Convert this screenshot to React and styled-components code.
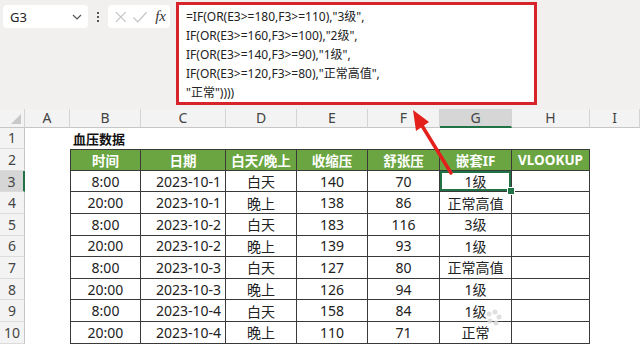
import React from "react";
import styled, { createGlobalStyle } from "styled-components";

const GlobalStyle = createGlobalStyle`
  html, body {
    margin: 0;
    padding: 0;
    background: #ffffff;
  }
  body {
    font-family: "Noto Sans", "Noto Sans CJK SC", sans-serif;
  }
`;

const columns = [
  { key: "A", width: 45 },
  { key: "B", width: 71 },
  { key: "C", width: 85 },
  { key: "D", width: 71 },
  { key: "E", width: 71 },
  { key: "F", width: 72 },
  { key: "G", width: 72 },
  { key: "H", width: 78 },
  { key: "I", width: 50 },
];

const headers = ["时间", "日期", "白天/晚上", "收缩压", "舒张压", "嵌套IF", "VLOOKUP"];

const rows = [
  ["8:00", "2023-10-1", "白天", "140", "70", "1级", ""],
  ["20:00", "2023-10-1", "晚上", "138", "86", "正常高值", ""],
  ["8:00", "2023-10-2", "白天", "183", "116", "3级", ""],
  ["20:00", "2023-10-2", "晚上", "139", "93", "1级", ""],
  ["8:00", "2023-10-3", "白天", "127", "80", "正常高值", ""],
  ["20:00", "2023-10-3", "晚上", "126", "94", "1级", ""],
  ["8:00", "2023-10-4", "白天", "158", "84", "1级", ""],
  ["20:00", "2023-10-4", "晚上", "110", "71", "正常", ""],
];

const formula = [
  '=IF(OR(E3>=180,F3>=110),"3级",',
  'IF(OR(E3>=160,F3>=100),"2级",',
  'IF(OR(E3>=140,F3>=90),"1级",',
  'IF(OR(E3>=120,F3>=80),"正常高值",',
  '"正常"))))',
];

const App = () => {
  return (
    <Page>
      <GlobalStyle />
      <TopBar>
        <NameBox>
          <span>G3</span>
          <svg width="10" height="6" viewBox="0 0 10 6">
            <path d="M1 1 L5 5 L9 1" fill="none" stroke="#555" strokeWidth="1.2" />
          </svg>
        </NameBox>
        <Dots>
          <i />
          <i />
          <i />
        </Dots>
        <FxTools>
          <svg width="14" height="14" viewBox="0 0 14 14">
            <path d="M2 2 L12 12 M12 2 L2 12" stroke="#c4c4c4" strokeWidth="1.3" />
          </svg>
          <svg width="16" height="14" viewBox="0 0 16 14">
            <path d="M1.5 7.5 L6 12 L15 2" fill="none" stroke="#c4c4c4" strokeWidth="1.3" />
          </svg>
          <Fx>fx</Fx>
        </FxTools>
        <FormulaBox>
          {formula.map((line, i) => (
            <FormulaLine key={i}>{line}</FormulaLine>
          ))}
        </FormulaBox>
      </TopBar>

      <Sheet>
        <Corner>
          <svg width="12" height="12" viewBox="0 0 12 12">
            <path d="M11 1 L11 11 L1 11 Z" fill="#c8c8c8" />
          </svg>
        </Corner>
        {columns.map((c) => (
          <ColHead key={c.key} $active={c.key === "G"}>
            {c.key}
          </ColHead>
        ))}

        <RowHead>1</RowHead>
        <Cell />
        <Title>血压数据</Title>
        <Cell />
        <Cell />
        <Cell />
        <Cell />
        <Cell />
        <Cell />
        <Cell />

        <RowHead>2</RowHead>
        <Cell />
        {headers.map((h, i) => (
          <HeadCell key={h} $first={i === 0}>
            {h}
          </HeadCell>
        ))}
        <Cell />

        {rows.map((r, ri) => (
          <React.Fragment key={ri}>
            <RowHead $active={ri === 0}>{ri + 3}</RowHead>
            <Cell />
            {r.map((v, ci) => (
              <DataCell
                key={ci}
                $first={ci === 0}
                $right={ci === 1}
                $selected={ri === 0 && ci === 5}
              >
                {v}
              </DataCell>
            ))}
            <Cell />
          </React.Fragment>
        ))}
      </Sheet>

      <Overlay width="640" height="344" viewBox="0 0 640 344">
        <line x1="451" y1="173" x2="421" y2="124" stroke="#e3201c" strokeWidth="3.5" strokeLinecap="round" />
        <polygon points="413,110 429,122 416,131" fill="#e3201c" />
        <g fill="#d8d8d8" opacity="0.8">
          <circle cx="489" cy="314" r="2.5" />
          <circle cx="495" cy="312" r="2.5" />
          <circle cx="499" cy="317" r="2.5" />
          <circle cx="496" cy="323" r="2.5" />
          <circle cx="490" cy="321" r="2.5" />
        </g>
      </Overlay>
    </Page>
  );
};

export default App;

const Page = styled.div`
  position: relative;
  width: 640px;
  height: 344px;
  overflow: hidden;
  background: #ffffff;
`;

const TopBar = styled.div`
  height: 109px;
  background: #f1f0ee;
  display: flex;
  align-items: flex-start;
  box-sizing: border-box;
  padding: 2px 0 0 3px;
`;

const NameBox = styled.div`
  width: 85px;
  height: 23px;
  margin-top: 3px;
  background: #ffffff;
  border-radius: 4px;
  display: flex;
  align-items: center;
  justify-content: space-between;
  box-sizing: border-box;
  padding: 0 6px 0 7px;
  font-family: "Noto Sans", sans-serif;
  font-size: 13px;
  color: #222;
`;

const Dots = styled.div`
  width: 20px;
  height: 23px;
  margin-top: 3px;
  display: flex;
  flex-direction: column;
  align-items: center;
  justify-content: center;
  gap: 2px;

  i {
    display: block;
    width: 2px;
    height: 2px;
    background: #555;
  }
`;

const FxTools = styled.div`
  width: 62px;
  height: 23px;
  margin-top: 3px;
  background: #ffffff;
  border-radius: 4px;
  display: flex;
  align-items: center;
  box-sizing: border-box;
  padding: 0 4px 0 6px;
  gap: 4px;
`;

const Fx = styled.span`
  font-family: "Liberation Serif", serif;
  font-style: italic;
  font-size: 15px;
  color: #333;
  margin-left: 4px;
`;

const FormulaBox = styled.div`
  width: 361px;
  height: 103px;
  margin-left: 6px;
  box-sizing: border-box;
  border: 3px solid #d7242a;
  background: #ffffff;
  padding: 2px 7px;
`;

const FormulaLine = styled.div`
  font-family: "Noto Sans", "Noto Sans CJK SC", sans-serif;
  font-size: 12px;
  line-height: 19px;
  color: #222;
  white-space: nowrap;
`;

const Sheet = styled.div`
  display: grid;
  grid-template-columns: 25px ${columns.map((c) => c.width + "px").join(" ")};
  grid-template-rows: 18.6px repeat(10, 21.6px);
  font-family: "Noto Sans", "Noto Sans CJK SC", sans-serif;
`;

const Corner = styled.div`
  background: #f3f3f3;
  border-right: 1px solid #d4d4d4;
  border-bottom: 1px solid #c6c6c6;
  display: flex;
  align-items: flex-end;
  justify-content: flex-end;
  padding: 0 2px 2px 0;
  box-sizing: border-box;
`;

const ColHead = styled.div`
  background: ${(p) => (p.$active ? "#d6d6d6" : "#f3f3f3")};
  border-right: 1px solid #d4d4d4;
  border-bottom: ${(p) => (p.$active ? "2px solid #217346" : "1px solid #c6c6c6")};
  box-sizing: border-box;
  display: flex;
  align-items: center;
  justify-content: center;
  font-size: 14px;
  color: #444;
`;

const RowHead = styled.div`
  background: ${(p) => (p.$active ? "#d6d6d6" : "#f3f3f3")};
  border-right: ${(p) => (p.$active ? "2px solid #217346" : "1px solid #c6c6c6")};
  border-bottom: 1px solid #dcdcdc;
  box-sizing: border-box;
  display: flex;
  align-items: center;
  justify-content: center;
  font-size: 14px;
  color: #444;
`;

const Cell = styled.div`
  background: #ffffff;
`;

const Title = styled.div`
  display: flex;
  align-items: center;
  padding-left: 3px;
  font-size: 13px;
  font-weight: 700;
  color: #111;
  white-space: nowrap;
`;

const HeadCell = styled.div`
  background: #6aa541;
  color: #ffffff;
  font-weight: 700;
  font-size: 13.5px;
  display: flex;
  align-items: center;
  justify-content: center;
  box-sizing: border-box;
  border-top: 1px solid #3a3a3a;
  border-right: 1px solid #3a3a3a;
  border-bottom: 1px solid #3a3a3a;
  border-left: ${(p) => (p.$first ? "1px solid #3a3a3a" : "none")};
  white-space: nowrap;
`;

const DataCell = styled.div`
  position: relative;
  display: flex;
  align-items: center;
  justify-content: ${(p) => (p.$right ? "flex-end" : "center")};
  padding-right: ${(p) => (p.$right ? "4px" : "0")};
  box-sizing: border-box;
  border-right: 1px solid #3a3a3a;
  border-bottom: 1px solid #3a3a3a;
  border-left: ${(p) => (p.$first ? "1px solid #3a3a3a" : "none")};
  font-size: 14px;
  color: #222;
  white-space: nowrap;
  box-shadow: ${(p) => (p.$selected ? "inset 0 0 0 2px #217346" : "none")};

  &::after {
    content: "";
    display: ${(p) => (p.$selected ? "block" : "none")};
    position: absolute;
    right: -4px;
    bottom: -4px;
    width: 6px;
    height: 6px;
    background: #217346;
    border: 1px solid #ffffff;
    z-index: 2;
  }
`;

const Overlay = styled.svg`
  position: absolute;
  left: 0;
  top: 0;
  pointer-events: none;
`;
